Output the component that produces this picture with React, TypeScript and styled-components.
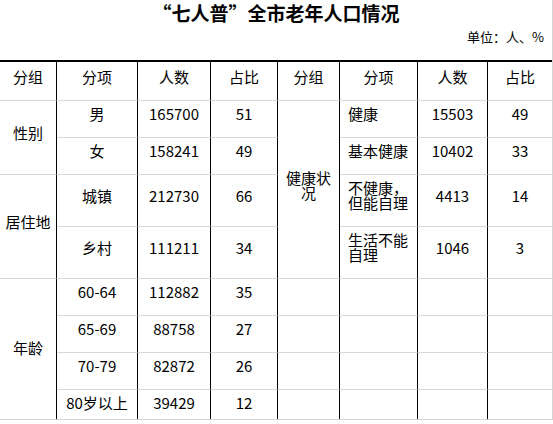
import React from "react";
import styled, { createGlobalStyle } from "styled-components";

const GlobalStyle = createGlobalStyle`
  html, body {
    margin: 0;
    padding: 0;
    background: #fff;
  }
  body {
    font-family: "Noto Sans CJK SC", "Noto Sans", sans-serif;
    color: #000;
  }
`;

const Sheet = styled.div`
  box-sizing: border-box;
  width: 553px;
  height: 420px;
  border-right: 1px solid #d4d4d4;
  border-bottom: 1px solid #d4d4d4;
  overflow: hidden;
`;

const Title = styled.h1`
  margin: 0;
  height: 25px;
  line-height: 25px;
  font-size: 19px;
  font-weight: 700;
  text-align: center;
  white-space: nowrap;
`;

const Unit = styled.div`
  height: 24px;
  line-height: 24px;
  padding-right: 8px;
  font-size: 13px;
  text-align: right;
`;

const Table = styled.table`
  margin-top: 11px;
  width: 552px;
  table-layout: fixed;
  border-collapse: separate;
  border-spacing: 0;
  border-top: 2px solid #000;
  font-size: 15px;
`;

const Row = styled.tr<{ $h: number }>`
  height: ${(p) => p.$h}px;
`;

const HeadCell = styled.th<{ $last?: boolean }>`
  box-sizing: border-box;
  padding: 0 2px 10px;
  font-weight: 400;
  text-align: center;
  vertical-align: middle;
  white-space: nowrap;
  border-bottom: 1px solid #d8d8d8;
  border-right: ${(p) => (p.$last ? "none" : "1px solid #000")};
`;

const GroupCell = styled.td`
  box-sizing: border-box;
  padding: 0 4px 10px;
  line-height: 1;
  text-align: center;
  vertical-align: middle;
  border-bottom: 1px solid #d8d8d8;
  border-right: 1px solid #000;
`;

const ItemCell = styled.td<{ $align: "left" | "center" }>`
  box-sizing: border-box;
  padding: ${(p) => (p.$align === "left" ? "0 4px 11px 8px" : "0 2px 11px")};
  line-height: 1;
  text-align: ${(p) => p.$align};
  vertical-align: middle;
  border-bottom: 1px solid #d8d8d8;
  border-right: 1px solid #000;
`;

const ValueCell = styled.td<{ $last?: boolean }>`
  box-sizing: border-box;
  padding: 0 2px 11px;
  text-align: center;
  vertical-align: middle;
  white-space: nowrap;
  border-bottom: 1px solid #d8d8d8;
  border-right: ${(p) => (p.$last ? "none" : "1px solid #000")};
`;

type Item = { name: string; count: number; share: number };
type Group = { name: string; items: Item[] };

const leftGroups: Group[] = [
  {
    name: "性别",
    items: [
      { name: "男", count: 165700, share: 51 },
      { name: "女", count: 158241, share: 49 },
    ],
  },
  {
    name: "居住地",
    items: [
      { name: "城镇", count: 212730, share: 66 },
      { name: "乡村", count: 111211, share: 34 },
    ],
  },
  {
    name: "年龄",
    items: [
      { name: "60-64", count: 112882, share: 35 },
      { name: "65-69", count: 88758, share: 27 },
      { name: "70-79", count: 82872, share: 26 },
      { name: "80岁以上", count: 39429, share: 12 },
    ],
  },
];

const rightGroups: Group[] = [
  {
    name: "健康状况",
    items: [
      { name: "健康", count: 15503, share: 49 },
      { name: "基本健康", count: 10402, share: 33 },
      { name: "不健康，但能自理", count: 4413, share: 14 },
      { name: "生活不能自理", count: 1046, share: 3 },
    ],
  },
];

const rowHeights = [37, 37, 52, 52, 37, 37, 37, 37];
const colWidths = [57, 81, 73, 67, 62, 78, 70, 64];
const headers = ["分组", "分项", "人数", "占比", "分组", "分项", "人数", "占比"];

type Slot = { group?: Group; item: Item };

const flatten = (groups: Group[]): Slot[] =>
  groups.flatMap((g) => g.items.map((item, i) => ({ group: i === 0 ? g : undefined, item })));

export default function App() {
  const left = flatten(leftGroups);
  const right = flatten(rightGroups);

  return (
    <>
      <GlobalStyle />
      <Sheet>
        <Title>“七人普”全市老年人口情况</Title>
        <Unit>单位：人、%</Unit>
        <Table>
          <colgroup>
            {colWidths.map((w, i) => (
              <col key={i} style={{ width: w }} />
            ))}
          </colgroup>
          <thead>
            <Row $h={39}>
              {headers.map((h, i) => (
                <HeadCell key={i} $last={i === headers.length - 1}>
                  {h}
                </HeadCell>
              ))}
            </Row>
          </thead>
          <tbody>
            {rowHeights.map((h, r) => {
              const l = left[r];
              const rt = right[r];
              return (
                <Row key={r} $h={h}>
                  {l?.group && <GroupCell rowSpan={l.group.items.length}>{l.group.name}</GroupCell>}
                  <ItemCell $align="center">{l?.item.name}</ItemCell>
                  <ValueCell>{l?.item.count}</ValueCell>
                  <ValueCell>{l?.item.share}</ValueCell>
                  {rt ? (
                    <>
                      {rt.group && <GroupCell rowSpan={rt.group.items.length}>{rt.group.name}</GroupCell>}
                      <ItemCell $align="left">{rt.item.name}</ItemCell>
                      <ValueCell>{rt.item.count}</ValueCell>
                      <ValueCell $last>{rt.item.share}</ValueCell>
                    </>
                  ) : (
                    <>
                      <GroupCell />
                      <ItemCell $align="left" />
                      <ValueCell />
                      <ValueCell $last />
                    </>
                  )}
                </Row>
              );
            })}
          </tbody>
        </Table>
      </Sheet>
    </>
  );
}
